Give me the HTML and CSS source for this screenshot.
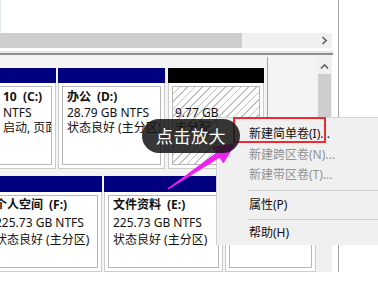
FILE: index.html
```html
<!DOCTYPE html>
<html lang="zh-CN">
<head>
<meta charset="utf-8">
<title>磁盘管理</title>
<link rel="stylesheet" href="styles.css">
</head>
<body>
<div class="screen">
  <div class="main">
    <div class="list-pane"></div>
    <div class="hscroll">
      <div class="hthumb"></div>
      <div class="htrack">
        <svg class="chev" width="7" height="9" viewBox="0 0 7 9"><path d="M1.5 1 L5.2 4.5 L1.5 8" fill="none" stroke="#5a5a5a" stroke-width="1.6"/></svg>
      </div>
    </div>
    <div class="splitter"></div>
    <div class="lower">
      <div class="disks">
        <div class="row row1">
          <div class="part w-a">
            <div class="hdr navy"></div>
            <div class="body"><div class="inner inner-a">
              <div class="lbl">10&nbsp;&nbsp;(C:)</div>
              <div>NTFS</div>
              <div>启动, 页面文件</div>
            </div></div>
          </div>
          <div class="part w-b">
            <div class="hdr navy"></div>
            <div class="body"><div class="inner">
              <div class="lbl">办公<span class="drv">(D:)</span></div>
              <div>28.79 GB NTFS</div>
              <div>状态良好 (主分区)</div>
            </div></div>
          </div>
          <div class="part w-c">
            <div class="hdr black"></div>
            <div class="body"><div class="inner hatch">
              <div>&nbsp;</div>
              <div>9.77 GB</div>
              <div>未分配</div>
            </div></div>
          </div>
        </div>
        <div class="row row2">
          <div class="part w-f">
            <div class="hdr navy"></div>
            <div class="body"><div class="inner">
              <div class="lbl">个人空间<span class="drv">(F:)</span></div>
              <div>225.73 GB NTFS</div>
              <div>状态良好 (主分区)</div>
            </div></div>
          </div>
          <div class="part w-e">
            <div class="hdr navy"></div>
            <div class="body"><div class="inner">
              <div class="lbl">文件资料<span class="drv">(E:)</span></div>
              <div>225.73 GB NTFS</div>
              <div>状态良好 (主分区)</div>
            </div></div>
          </div>
          <div class="part w-g">
            <div class="hdr navy"></div>
            <div class="body"><div class="inner"></div></div>
          </div>
        </div>
      </div>
      <div class="vscroll">
        <div class="vbtn">
          <svg width="9" height="7" viewBox="0 0 9 7"><path d="M1 5.5 L4.5 1.8 L8 5.5" fill="none" stroke="#5a5a5a" stroke-width="1.6"/></svg>
        </div>
        <div class="vthumb"></div>
      </div>
    </div>
  </div>
  <div class="side"></div>
</div>

<div class="menu">
  <div class="mi">新建简单卷(I)...</div>
  <div class="mi dis">新建跨区卷(N)...</div>
  <div class="mi dis">新建带区卷(T)...</div>
  <div class="sep s1"></div>
  <div class="mi">属性(P)</div>
  <div class="sep s2"></div>
  <div class="mi">帮助(H)</div>
</div>
<div class="redbox"></div>
<svg class="arrow" width="378" height="286" viewBox="0 0 378 286">
  <polygon points="168.4,189.6 219.5,157.8 223.4,163.6 236,143 212.2,147 216.1,152.8 167.6,188.4" fill="#ee22ee"/>
</svg>
<div class="bubble">点击放大</div>
</body>
</html>
```

FILE: styles.css
```css
* { box-sizing: border-box; }
html, body { margin: 0; padding: 0; }
body {
  width: 378px;
  height: 286px;
  overflow: hidden;
  position: relative;
  background: #fff;
  font-family: "Noto Sans", "Noto Sans CJK SC", sans-serif;
  font-size: 12px;
  color: #111;
}
.screen { display: flex; height: 286px; }
.main {
  width: 339px;
  height: 272px;
  border-right: 1px solid #a4a4a4;
  display: flex;
  flex-direction: column;
  background: #fff;
}
.side { flex: 1; background: #fff; }
.list-pane { height: 33px; border-left: 1px solid #e2e8ef; background: #fff; }
.hscroll { height: 15px; width: 332px; display: flex; }
.hthumb { width: 242px; background: #cdcdcd; }
.htrack {
  flex: 1;
  background: #f0f0f0;
  display: flex;
  align-items: center;
  justify-content: flex-end;
  padding-right: 4px;
}
.splitter {
  height: 7px;
  width: 333px;
  background: linear-gradient(#fbfbfb 0 3px, #e6e6e6 3px 5px);
  border-bottom: 2px solid #8e8e8e;
}
.lower { flex: 1; display: flex; }
.disks { width: 317px; background: #f4f4f4; overflow: hidden; }
.vscroll { width: 15px; background: #f0f0f0; padding-top: 3px; }
.vbtn { height: 16px; display: flex; align-items: center; justify-content: center; }
.vthumb { height: 150px; background: #cdcdcd; margin: 0 1px; }

.row { display: flex; }
.row1 {
  width: 308px;
  margin-left: -40px;
  margin-top: 2px;
  padding-top: 11px;
  padding-right: 3px;
  height: 112px;
  border-right: 1px solid #a2a2a2;
}
.row2 {
  margin-left: -14px;
  margin-top: 7px;
  height: 96px;
}
.part { display: flex; flex-direction: column; }
.w-a { width: 96px; margin-right: 2px; }
.w-b { width: 107px; margin-right: 3px; }
.w-c { width: 96px; }
.w-f { width: 116px; margin-right: 2px; }
.w-e { width: 119px; margin-right: 2px; }
.w-g { width: 91px; }
.hdr { height: 15px; }
.row2 .hdr { height: 16px; }
.navy { background: #01017f; }
.black { background: #000; }
.body {
  flex: 1;
  background: #fff;
  border: 1px solid #cbcbcb;
  border-top: 0;
  padding: 3px;
}
.inner {
  height: 100%;
  border: 1px solid #b7b7b7;
  padding: 2px 4px 0;
  line-height: 15.5px;
  white-space: nowrap;
  overflow: hidden;
}
.row2 .inner { padding-top: 0; line-height: 17.5px; }
.inner-a { padding-left: 38px; }
.lbl { font-weight: bold; }
.drv { margin-left: 6px; }
.hatch {
  background: repeating-linear-gradient(135deg, #fff 0 4.3px, #c2c2c2 4.3px 5.4px);
  padding-left: 2px;
}

.menu {
  position: absolute;
  left: 216px;
  top: 117px;
  width: 162px;
  height: 128px;
  background: #f0f0f0;
  border-left: 1px solid #cfcfcf;
  border-top: 1px solid #d6d6d6;
  padding-top: 6px;
}
.mi {
  height: 20.5px;
  line-height: 20.5px;
  padding-left: 32px;
  color: #111;
  white-space: nowrap;
}
.mi.dis { color: #929292; }
.sep { height: 1px; background: #d2d2d2; margin-left: 30px; }
.s1 { margin-top: 4.5px; margin-bottom: 4px; }
.s2 { margin-top: 3px; margin-bottom: 3px; }
.redbox {
  position: absolute;
  left: 233px;
  top: 117px;
  width: 93px;
  height: 26px;
  border: 2px solid #ec2c33;
}
.arrow { position: absolute; left: 0; top: 0; }
.bubble {
  position: absolute;
  left: 142px;
  top: 119px;
  width: 98px;
  height: 34px;
  border-radius: 17px;
  background: rgba(22, 22, 22, 0.86);
  color: #fff;
  font-family: "Noto Sans CJK SC", sans-serif;
  font-size: 17px;
  line-height: 34px;
  text-align: center;
  letter-spacing: 0.5px;
}
```
